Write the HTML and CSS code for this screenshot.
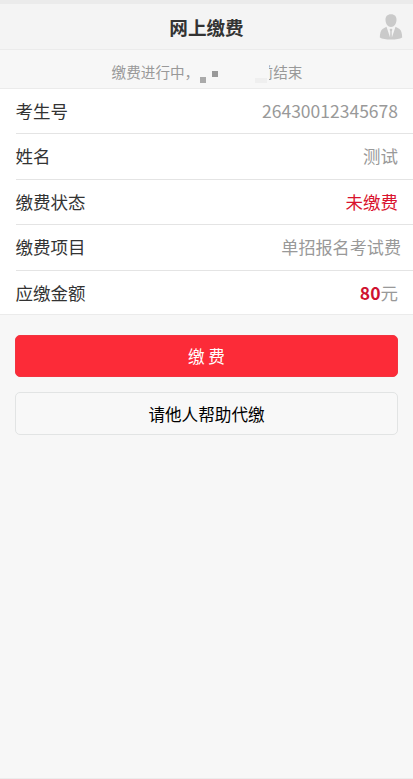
FILE: index.html
```
<!DOCTYPE html>
<html lang="zh-CN">
<head>
<meta charset="utf-8">
<meta name="viewport" content="width=device-width, initial-scale=1">
<title>网上缴费</title>
<link rel="stylesheet" href="styles.css">
</head>
<body>
<div class="page">
  <header class="header">
    <h1 class="title">网上缴费</h1>
    <svg class="avatar" viewBox="0 0 24 26" aria-hidden="true">
      <path d="M12 0.300C8.300.300 6.300 2.600 6.500 6c.2 4 2.300 6.900 5.500 6.900S17.300 10 17.500 6C17.700 2.600 15.700.300 12 .300Z"/>
      <path d="M7.500 12.700 3.500 15C1.700 16 .900 19.500.800 23.500 3 25 7 25.600 12 25.600s9-.600 11.200-2.100C23.100 19.500 22.300 16 20.500 15L16.500 12.700 12.900 23.500 12.700 17.500 13.400 15.500 12 14.600 10.600 15.500 11.300 17.500 11.100 23.500Z"/>
    </svg>
  </header>
  <div class="notice">
    <span>缴费进行中，</span>
    <span class="mask"><i class="block low"></i><i class="block high"></i><i class="block pale"></i></span>
    <span class="clipped"><span>前</span></span>
    <span>结束</span>
  </div>
  <main>
    <dl class="list">
      <div class="row"><dt>考生号</dt><dd class="number">26430012345678</dd></div>
      <div class="row"><dt>姓名</dt><dd>测试</dd></div>
      <div class="row"><dt>缴费状态</dt><dd class="unpaid">未缴费</dd></div>
      <div class="row"><dt>缴费项目</dt><dd class="project">单招报名考试费</dd></div>
      <div class="row"><dt>应缴金额</dt><dd><b>80</b>元</dd></div>
    </dl>
    <div class="actions">
      <button class="button primary">缴 费</button>
      <button class="button">请他人帮助代缴</button>
    </div>
  </main>
</div>
</body>
</html>
```
FILE: styles.css
```
* { box-sizing: border-box; }
body {
  margin: 0;
  background: #f7f7f7;
  color: #333;
  font-family: "Noto Sans CJK SC", sans-serif;
}
.page {
  height: 779px;
  overflow: hidden;
  border-top: 4px solid #ebebeb;
  border-bottom: 1px solid #ececec;
}
.header {
  display: grid;
  grid-template-columns: 1fr auto 1fr;
  align-items: center;
  height: 46px;
  padding-right: 10px;
  padding-left: 10px;
  background: #f4f4f4;
  border-bottom: 1px solid #ebebeb;
}
.title {
  grid-column: 2;
  margin: 0;
  font-size: 18.6px;
  line-height: 28px;
  font-weight: 700;
}
.avatar {
  justify-self: end;
  width: 24px;
  height: 26px;
  fill: #cacaca;
}
.notice {
  display: flex;
  justify-content: center;
  height: 39px;
  padding: 1px 0 0 1px;
  border-bottom: 1px solid #ebebeb;
  color: #999;
  font-size: 14.6px;
  line-height: 42px;
}
.mask {
  display: flex;
  width: 70px;
  height: 36px;
}
.block {
  width: 6px;
  height: 6px;
  background: #aaa;
}
.low { margin: 26px 0 0 1px; }
.high { margin: 20px 0 0 6px; background: #999; }
.pale { width: 12px; height: 5px; margin: 27px 0 0 37px; background: #efefef; }
.clipped {
  display: flex;
  justify-content: flex-end;
  width: 4px;
  overflow: hidden;
}
.list {
  margin: 0;
  padding-left: 16px;
  background: #fff;
  border-bottom: 1px solid #ebebeb;
  font-size: 17.5px;
}
.row {
  display: flex;
  justify-content: space-between;
  align-items: center;
  height: 45px;
  padding: 0 15px 2px 0;
  border-bottom: 1px solid #e4e4e4;
}
.row:nth-child(even) { height: 46px; }
.row:last-child { height: 43px; padding-bottom: 0; border-bottom: 0; }
.row dt { margin-left: -0.5px; }
.row dd { margin: 0; color: #999; }
.row .unpaid { color: #d9132d; }
.row .project { margin-right: -3px; font-size: 17.1px; }
.row b { color: #cf1230; }
.actions {
  display: grid;
  gap: 15px;
  padding: 20px 15px;
}
.button {
  height: 43px;
  padding: 0;
  border: 1px solid #e2e4e4;
  border-radius: 5px;
  background: #f8f8f8;
  color: #000;
  font: 16.6px "Noto Sans CJK SC", sans-serif;
}
.primary {
  height: 42px;
  border-color: #f23440;
  background: #fc2b38;
  color: #fff;
}
```
